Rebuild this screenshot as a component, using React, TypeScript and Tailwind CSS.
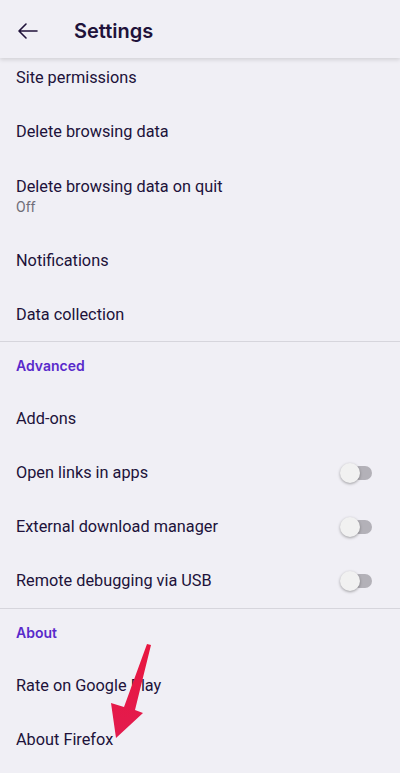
import React from "react";

const ink = "text-[#20123a]";

function Row({ title, sub, toggle }: { title: string; sub?: string; toggle?: boolean }) {
  return (
    <div className={`flex items-center justify-between px-4 ${sub ? "h-[75px]" : "h-[54px]"}`}>
      <div className="flex flex-col">
        <span className={`text-[16.3px] leading-[22px] ${ink}`}>{title}</span>
        {sub && <span className="text-[14px] leading-[19px] text-[#6f6d78]">{sub}</span>}
      </div>
      {toggle && (
        <div className="relative mr-[12px] h-[20px] w-[32px]">
          <div className="absolute left-[12px] top-[3px] h-[14px] w-[20px] rounded-full bg-[#b3b1b8]" />
          <div className="absolute left-0 top-0 h-[20px] w-[20px] rounded-full bg-[#f1f1f1] shadow-[0_1px_3px_rgba(0,0,0,0.35)]" />
        </div>
      )}
    </div>
  );
}

function Category({ title }: { title: string }) {
  return (
    <div className="flex h-[50px] items-center px-4 pb-[4px]">
      <span className="text-[14px] font-semibold text-[#592acb]" style={{ fontFamily: "Inter, sans-serif" }}>
        {title}
      </span>
    </div>
  );
}

export default function App() {
  return (
    <div className="relative flex h-[773px] w-[400px] flex-col overflow-hidden bg-[#f0eff5]" style={{ fontFamily: "Roboto, 'Noto Sans', sans-serif" }}>
      <div className="z-10 flex h-[58px] shrink-0 items-center bg-[#f0eff5] pt-[4px] shadow-[0_2px_4px_rgba(0,0,0,0.12)]">
        <svg width="24" height="24" viewBox="0 0 24 24" className="ml-[16px]" fill="none" stroke="#20123a" strokeWidth="1.6" strokeLinecap="round" strokeLinejoin="round">
          <path d="M21 12H3.5M10 5l-7 7 7 7" />
        </svg>
        <span className={`ml-[34px] text-[20px] font-semibold ${ink}`} style={{ fontFamily: "Inter, sans-serif" }}>
          Settings
        </span>
      </div>
      <div className="flex-1 overflow-hidden">
        <div className="-mt-[7px]">
          <Row title="Site permissions" />
          <Row title="Delete browsing data" />
          <Row title="Delete browsing data on quit" sub="Off" />
          <Row title="Notifications" />
          <Row title="Data collection" />
          <div className="-mt-px h-px bg-[#d6d5dc]" />
          <Category title="Advanced" />
          <Row title="Add-ons" />
          <Row title="Open links in apps" toggle />
          <Row title="External download manager" toggle />
          <Row title="Remote debugging via USB" toggle />
          <div className="h-px bg-[#d6d5dc]" />
          <Category title="About" />
          <Row title="Rate on Google Play" />
          <Row title="About Firefox" />
        </div>
      </div>
      <svg className="pointer-events-none absolute left-0 top-0" width="400" height="773" viewBox="0 0 400 773">
        <defs>
          <linearGradient id="ag" x1="0" y1="0" x2="0" y2="1">
            <stop offset="0" stopColor="#e8163f" />
            <stop offset="1" stopColor="#e31b4e" />
          </linearGradient>
        </defs>
        <polygon points="147,644 151,645 135,710 143,713 116,738 111,703 124,707" fill="url(#ag)" />
      </svg>
    </div>
  );
}
